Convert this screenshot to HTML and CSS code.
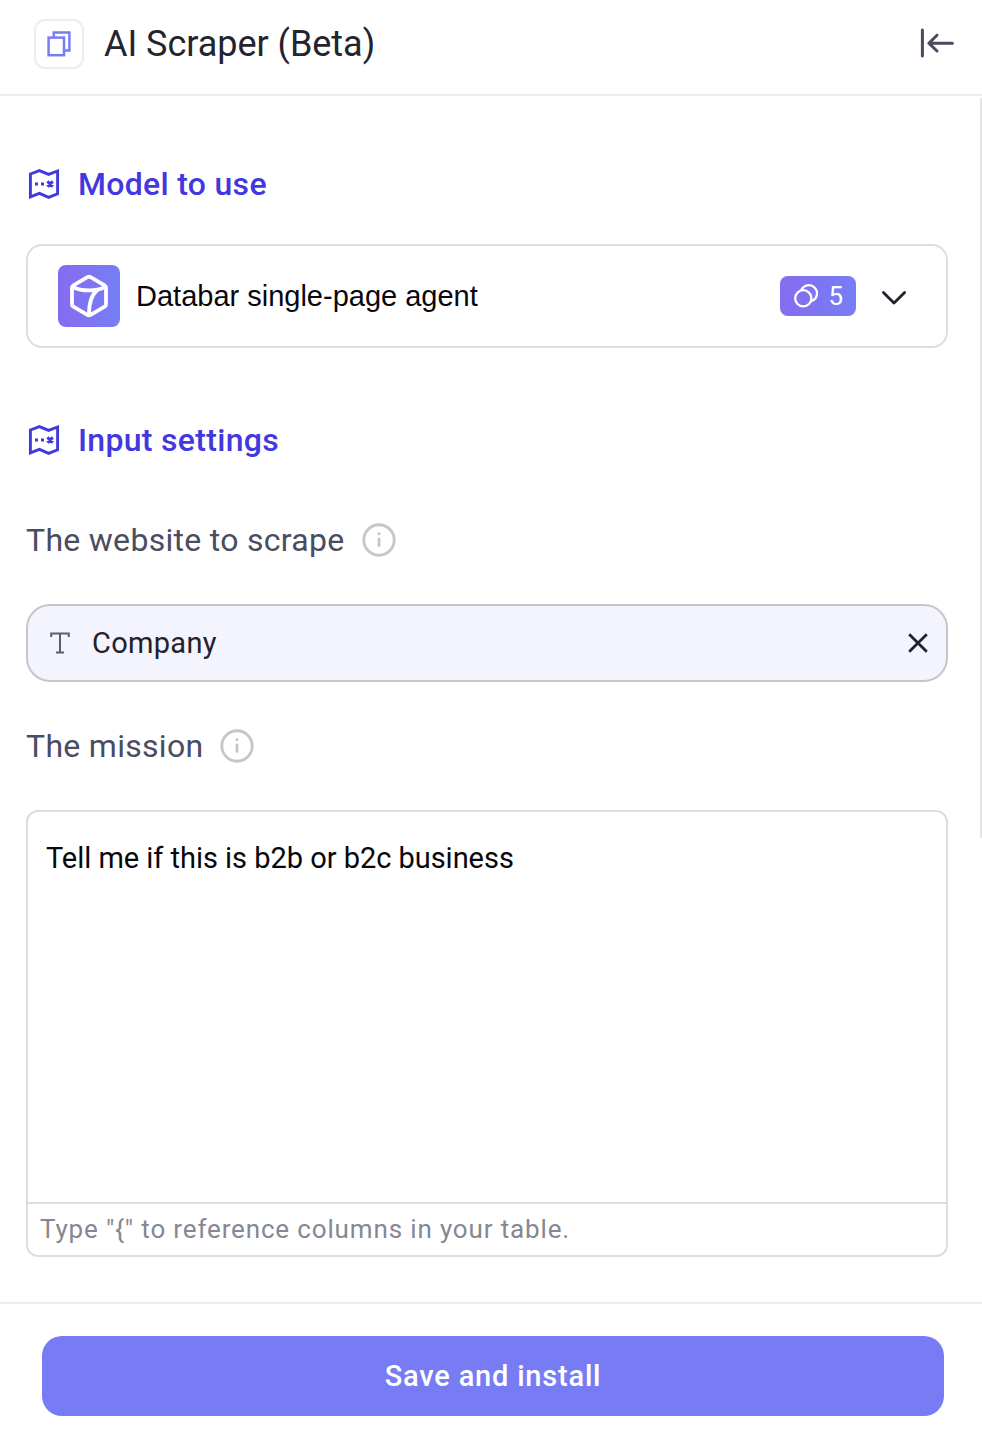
FILE: index.html
```html
<!DOCTYPE html>
<html lang="en">
<head>
  <meta charset="UTF-8">
  <meta name="viewport" content="width=device-width, initial-scale=1">
  <title>AI Scraper (Beta)</title>
  <link rel="stylesheet" href="styles.css">
</head>
<body>
  <div class="panel">
    <header class="header">
      <div class="header-icon">
        <svg width="24" height="26" viewBox="0 0 24 26" fill="none" stroke="#787cf4" stroke-width="2.5">
          <rect x="1.6" y="6.6" width="15.4" height="17.6"/>
          <path d="M6.8 6V1.6H22.4V19.4H17.4"/>
        </svg>
      </div>
      <h1 class="title">AI Scraper (Beta)</h1>
      <svg class="collapse" width="36" height="30" viewBox="0 0 36 30" fill="none" stroke="#4a4a62" stroke-width="3" stroke-linecap="round" stroke-linejoin="round">
        <path d="M3.4 1.9V28.1M33.4 15.2H10M18 7.2L9.8 15.2L18 23"/>
      </svg>
    </header>

    <main class="content">
      <div class="scrollbar"></div>

      <h2 class="section-title">
        <svg width="32" height="32" viewBox="0 0 32 32" fill="none" stroke="#4338e0" stroke-width="2.9">
          <path d="M2.4 6L11.4 2.6L20.6 6.4L29.6 3V25.8L20.6 29.4L11.4 25.4L2.4 28.8Z"/>
          <path d="M7 16H10M13 16H16M19.4 13.4L24.8 18.6M24.8 13.4L19.4 18.6"/>
        </svg>
        Model to use
      </h2>
      <div class="select">
        <div class="agent-icon">
          <svg width="40" height="44" viewBox="0 0 40 44" fill="none" stroke="#fff" stroke-width="3.8" stroke-linejoin="round" stroke-linecap="round">
            <path d="M18.4 3.2Q20 2.2 21.6 3.2L35.6 11.4Q37 12.2 37 13.8V30.2Q37 31.8 35.6 32.6L21.6 40.8Q20 41.8 18.4 40.8L4.4 32.6Q3 31.8 3 30.2V13.8Q3 12.2 4.4 11.4Z"/>
            <path d="M3.6 13C13 17.6 27 17.6 36.4 13M28.4 16C22 21 20 29 20 40.6"/>
          </svg>
        </div>
        <span class="agent-name">Databar single-page agent</span>
        <div class="price">
          <svg width="24" height="24" viewBox="0 0 24 24" fill="none" stroke="#fff" stroke-width="2.3">
            <circle cx="9.3" cy="14.3" r="8.1"/>
            <path d="M7.2 6.3A8.2 8.2 0 1 1 17.6 17.1"/>
          </svg>
          <span>5</span>
        </div>
        <svg class="chevron" width="26" height="16" viewBox="0 0 26 16" fill="none" stroke="#22222e" stroke-width="2.8" stroke-linecap="round" stroke-linejoin="round">
          <path d="M2.4 2.4L13 13L23.6 2.4"/>
        </svg>
      </div>

      <h2 class="section-title">
        <svg width="32" height="32" viewBox="0 0 32 32" fill="none" stroke="#4338e0" stroke-width="2.9">
          <path d="M2.4 6L11.4 2.6L20.6 6.4L29.6 3V25.8L20.6 29.4L11.4 25.4L2.4 28.8Z"/>
          <path d="M7 16H10M13 16H16M19.4 13.4L24.8 18.6M24.8 13.4L19.4 18.6"/>
        </svg>
        Input settings
      </h2>

      <div class="label">
        The website to scrape
        <svg width="34" height="34" viewBox="0 0 34 34" fill="none" stroke="#c6c7cb" stroke-width="2.9" stroke-linecap="round">
          <circle cx="17" cy="17" r="15.2"/>
          <path d="M17 16V22.6M17 10.8V10.9"/>
        </svg>
      </div>
      <div class="field">
        <svg width="20" height="22" viewBox="0 0 20 22" fill="none" stroke="#5a5e70" stroke-width="2">
          <path d="M1.2 5V1.4H18.8V5M10 1.4V20.4M6 20.4H14"/>
        </svg>
        <span class="field-value">Company</span>
        <svg width="20" height="20" viewBox="0 0 20 20" fill="none" stroke="#22222e" stroke-width="2.8">
          <path d="M1.2 1.2L18.8 18.8M18.8 1.2L1.2 18.8"/>
        </svg>
      </div>

      <div class="label">
        The mission
        <svg width="34" height="34" viewBox="0 0 34 34" fill="none" stroke="#c6c7cb" stroke-width="2.9" stroke-linecap="round">
          <circle cx="17" cy="17" r="15.2"/>
          <path d="M17 16V22.6M17 10.8V10.9"/>
        </svg>
      </div>
      <div class="editor">
        <div class="editor-text">Tell me if this is b2b or b2c business</div>
        <div class="editor-hint">Type "{" to reference columns in your table.</div>
      </div>
    </main>

    <footer class="footer">
      <button class="save">Save and install</button>
    </footer>
  </div>
</body>
</html>
```
FILE: styles.css
```css
* {
  box-sizing: border-box;
}
body {
  margin: 0;
  background: #fff;
  font-family: Roboto, sans-serif;
}
svg {
  flex: none;
}
.panel {
  display: flex;
  flex-direction: column;
  height: 1430px;
}

/* header */
.header {
  display: flex;
  align-items: center;
  height: 96px;
  padding: 0 27px 8px 34px;
  border-bottom: 2px solid #ececf2;
}
.header-icon {
  display: flex;
  align-items: center;
  justify-content: center;
  width: 50px;
  height: 50px;
  margin-top: 2px;
  border: 2px solid #ececf4;
  border-radius: 11px;
}
.title {
  flex: 1;
  margin: 2px 0 0 20px;
  font-size: 36px;
  font-weight: 400;
  line-height: 42px;
  letter-spacing: -0.03px;
  color: #24242e;
}

/* content */
.content {
  position: relative;
  flex: 1;
  padding: 68px 34px 0 26px;
}
.scrollbar {
  position: absolute;
  top: 2px;
  right: 0;
  width: 2px;
  height: 740px;
  border-radius: 2px 0 0 2px;
  background: #e4e4e6;
}
.section-title {
  display: flex;
  align-items: center;
  gap: 18px;
  height: 40px;
  margin: 0 0 40px;
  padding-left: 2px;
  font-size: 32px;
  font-weight: 500;
  letter-spacing: 0.3px;
  color: #4338e0;
}
.select {
  display: flex;
  align-items: center;
  height: 104px;
  margin-bottom: 72px;
  padding: 0 39px 0 30px;
  border: 2px solid #dcdce2;
  border-radius: 16px;
}
.agent-icon {
  display: flex;
  align-items: center;
  justify-content: center;
  width: 62px;
  height: 62px;
  border-radius: 8px;
  background: linear-gradient(90deg, #866bf0, #757ff5);
}
.agent-name {
  flex: 1;
  margin-left: 16px;
  font-family: "Liberation Sans", Arial, sans-serif;
  font-size: 29px;
  color: #08080c;
}
.price {
  display: flex;
  align-items: center;
  gap: 10px;
  height: 40px;
  padding: 0 13px 0 14px;
  border-radius: 8px;
  background: linear-gradient(90deg, #866bf0, #757ff5);
  font-size: 26px;
  color: #fff;
}
.chevron {
  margin: 3px 0 0 25px;
}

.section-title + .label {
  margin-top: 60px;
}
.label {
  display: flex;
  align-items: center;
  gap: 17px;
  height: 40px;
  margin: 44px 0;
  font-size: 32px;
  letter-spacing: 0.29px;
  color: #4a4c60;
}
.field {
  display: flex;
  align-items: center;
  height: 78px;
  padding: 0 18px 0 22px;
  border: 2px solid #c6c6ca;
  border-radius: 24px;
  background: #f4f4fe;
}
.field-value {
  flex: 1;
  margin-left: 22px;
  font-size: 29px;
  letter-spacing: 0.3px;
  color: #22222c;
}
.editor {
  display: flex;
  flex-direction: column;
  height: 447px;
  border: 2px solid #dcdce2;
  border-radius: 12px;
}
.editor-text {
  flex: 1;
  padding: 28px 18px;
  font-size: 29px;
  line-height: 36px;
  letter-spacing: -0.03px;
  color: #08080c;
}
.editor-hint {
  height: 53px;
  padding-left: 12px;
  border-top: 2px solid #dcdce2;
  font-size: 26px;
  line-height: 50px;
  letter-spacing: 0.85px;
  color: #858793;
}

/* footer */
.footer {
  height: 128px;
  padding: 32px 38px 0 42px;
  border-top: 2px solid #ececf2;
}
.save {
  display: block;
  width: 100%;
  height: 80px;
  border: none;
  border-radius: 20px;
  background: #787cf4;
  font-family: inherit;
  font-size: 29px;
  font-weight: 500;
  letter-spacing: 0.8px;
  color: #fff;
}
```
